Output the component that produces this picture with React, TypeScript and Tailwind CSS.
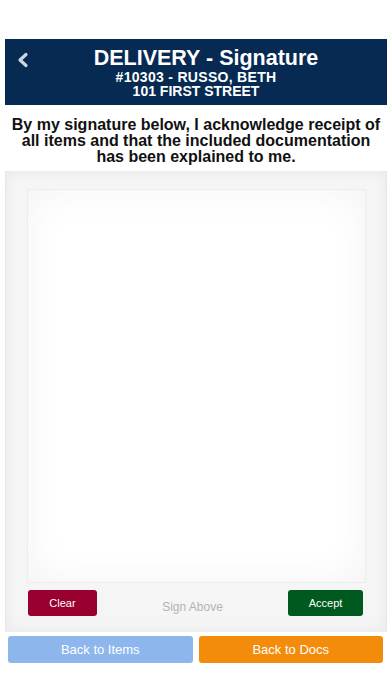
export default function App() {
  return (
    <div className="w-[392px] h-[696px] bg-white pt-[39px] font-['Liberation_Sans',Arial,sans-serif]">
      <div className="ml-[5px] w-[382px]">
        {/* header */}
        <div className="relative h-[66px] bg-[#062a52] pt-[7px] text-center text-white">
          <svg
            className="absolute left-[11px] top-[13px]"
            width="14"
            height="16"
            viewBox="0 0 14 16"
            fill="none"
          >
            <path
              d="M10 2.5 L4 8 L10 13.5"
              stroke="#cdd7e4"
              strokeWidth="3.2"
              strokeLinecap="round"
              strokeLinejoin="round"
            />
          </svg>
          <div className="pl-[20px] text-[21.5px] font-bold leading-[24px]">DELIVERY - Signature</div>
          <div className="text-[14px] font-bold leading-[14px] tracking-[0.3px]">#10303 - RUSSO, BETH</div>
          <div className="text-[14px] font-bold leading-[14px]">101 FIRST STREET</div>
        </div>

        {/* statement */}
        <div className="bg-white pt-[12px] pb-[6px] text-center text-[16px] font-bold leading-[16px] text-[#111] whitespace-nowrap">
          By my signature below, I acknowledge receipt of
          <br />
          all items and that the included documentation
          <br />
          has been explained to me.
        </div>

        {/* signature panel */}
        <div className="h-[461px] bg-[#f5f5f5] pt-[18px] shadow-[inset_0_0_14px_rgba(0,0,0,0.06)] border-l border-r border-[#e8e8e8]">
          <div className="ml-[21px] h-[394px] w-[339px] border border-[#ededed] bg-white shadow-[inset_0_0_40px_rgba(0,0,0,0.05)]" />
          <div className="mt-[7px] flex items-center justify-between pl-[22px] pr-[23px]">
            <button className="h-[26px] w-[69px] rounded-[3px] bg-[#990030] text-[11px] text-white">
              Clear
            </button>
            <span className="mt-[8px] text-[12px] text-[#b4b4b4]">Sign Above</span>
            <button className="h-[26px] w-[75px] rounded-[3px] bg-[#00591e] text-[11px] text-white">
              Accept
            </button>
          </div>
        </div>

        {/* bottom nav */}
        <div className="flex gap-[6px] bg-white pl-[3px] pr-[4px] pt-[4px] pb-[4px]">
          <button className="h-[27px] flex-1 rounded-[3px] bg-[#8cb6ec] text-[13px] text-white">
            Back to Items
          </button>
          <button className="h-[27px] flex-1 rounded-[3px] bg-[#f28c0a] text-[13px] text-white">
            Back to Docs
          </button>
        </div>
      </div>
    </div>
  )
}
